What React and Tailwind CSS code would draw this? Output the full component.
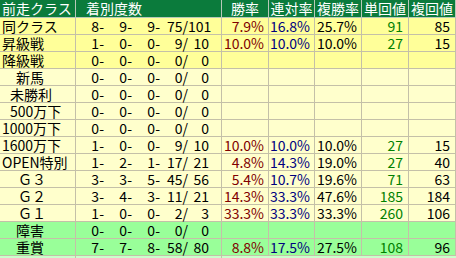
const Y = 'bg-[#ffff99]';
const L = 'bg-[#ffffcc]';
const G = 'bg-[#99ff99]';

const rows = [
  { label: '同クラス', pad: 'pl-[2px]', bg: Y, d: [8, 9, 9, 75, 101], r: ['7.9%', '16.8%', '25.7%', '91', '85'] },
  { label: '昇級戦', pad: 'pl-[2px]', bg: Y, d: [1, 0, 0, 9, 10], r: ['10.0%', '10.0%', '10.0%', '27', '15'] },
  { label: '降級戦', pad: 'pl-[2px]', bg: Y, d: [0, 0, 0, 0, 0], r: null },
  { label: '新馬', pad: 'pl-[16px]', bg: L, d: [0, 0, 0, 0, 0], r: null },
  { label: '未勝利', pad: 'pl-[10px]', bg: L, d: [0, 0, 0, 0, 0], r: null },
  { label: '500万下', pad: 'pl-[10px]', bg: L, d: [0, 0, 0, 0, 0], r: null },
  { label: '1000万下', pad: 'pl-[2px]', bg: L, d: [0, 0, 0, 0, 0], r: null },
  { label: '1600万下', pad: 'pl-[2px]', bg: L, d: [1, 0, 0, 9, 10], r: ['10.0%', '10.0%', '10.0%', '27', '15'] },
  { label: 'OPEN特別', pad: 'pl-[2px]', bg: L, d: [1, 2, 1, 17, 21], r: ['4.8%', '14.3%', '19.0%', '27', '40'] },
  { label: 'Ｇ３', pad: 'pl-[18px]', bg: L, d: [3, 3, 5, 45, 56], r: ['5.4%', '10.7%', '19.6%', '71', '63'] },
  { label: 'Ｇ２', pad: 'pl-[18px]', bg: L, d: [3, 4, 3, 11, 21], r: ['14.3%', '33.3%', '47.6%', '185', '184'] },
  { label: 'Ｇ１', pad: 'pl-[18px]', bg: L, d: [1, 0, 0, 2, 3], r: ['33.3%', '33.3%', '33.3%', '260', '106'] },
  { label: '障害', pad: 'pl-[16px]', bg: G, d: [0, 0, 0, 0, 0], r: null },
  { label: '重賞', pad: 'pl-[16px]', bg: G, d: [7, 7, 8, 58, 80], r: ['8.8%', '17.5%', '27.5%', '108', '96'] },
];

const rateColors = ['text-[#800000]', 'text-[#000080]', 'text-black', 'text-[#008000]', 'text-black'];
const widths = ['w-[47px]', 'w-[46px]', 'w-[47px]', 'w-[47px]', 'w-[47px]'];
const cell = 'border-r border-b border-[#c4c0a8] h-[17px] leading-[16px] shrink-0';

function Row({ row }) {
  const [a, b, c, w, n] = row.d;
  return (
    <div className={`flex ${row.bg}`}>
      <div className={`${cell} w-[76px] whitespace-nowrap ${row.pad}`}>{row.label}</div>
      <div className={`${cell} w-[146px] flex`}>
        <span className="w-[28px] text-right">{a}-</span>
        <span className="w-[28px] text-right">{b}-</span>
        <span className="w-[28px] text-right">{c}-</span>
        <span className="w-[28px] text-right">{w}/</span>
        <span className="w-[21px] text-right">{n}</span>
      </div>
      {widths.map((wd, i) => (
        <div
          key={i}
          className={`${cell} ${wd} text-right ${i < 3 ? 'pr-[4px]' : 'pr-[5px]'} ${rateColors[i]}`}
        >
          {row.r ? row.r[i] : ''}
        </div>
      ))}
    </div>
  );
}

export default function App() {
  const head = 'border-r border-b border-[#b8c8b8] h-[18px] leading-[17px] shrink-0 text-white';
  return (
    <div className="w-[456px] h-[258px] overflow-hidden bg-white text-[14px] text-black font-['Noto_Sans_CJK_JP',sans-serif]">
      <div className="flex bg-[#0b7b3c]">
        <div className={`${head} w-[76px] pl-[2px]`}>前走クラス</div>
        <div className={`${head} w-[146px] pl-[10px]`}>着別度数</div>
        <div className={`${head} w-[47px] text-center`}>勝率</div>
        <div className={`${head} w-[46px] text-center`}>連対率</div>
        <div className={`${head} w-[47px] text-center`}>複勝率</div>
        <div className={`${head} w-[47px] text-center`}>単回値</div>
        <div className={`${head} w-[47px] text-center`}>複回値</div>
      </div>
      {rows.map((row) => (
        <Row key={row.label} row={row} />
      ))}
      <div className="flex h-[3px] bg-[#ccffcc]">
        <div className="w-[76px] border-r border-[#c4c0a8]" />
        <div className="w-[146px] border-r border-[#c4c0a8]" />
      </div>
    </div>
  );
}
